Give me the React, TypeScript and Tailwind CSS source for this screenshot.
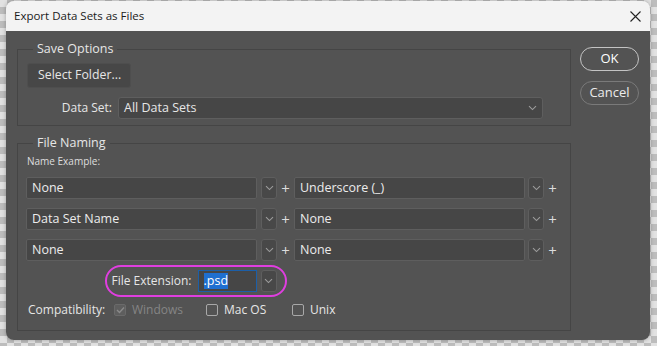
import React from 'react';

const font = { fontFamily: '"Open Sans", "Liberation Sans", sans-serif' };

function Chevron({ className = '' }: { className?: string }) {
  return (
    <svg width="9" height="6" viewBox="0 0 9 6" className={className}>
      <path d="M1 1.2 L4.5 4.6 L8 1.2" fill="none" stroke="#9c9c9c" strokeWidth="1.1" />
    </svg>
  );
}

function ChevronButton() {
  return (
    <div className="w-[16px] h-[22px] shrink-0 rounded-[3px] border border-[#5e5e5e] bg-[#484848] flex items-center justify-center">
      <Chevron />
    </div>
  );
}

function Field({ value }: { value: string }) {
  return (
    <div className="w-[231px] h-[22px] shrink-0 rounded-[2px] border border-[#5e5e5e] bg-[#464646] flex items-center pl-[5px] text-[12.5px] text-[#ececec]">
      {value}
    </div>
  );
}

function Plus() {
  return (
    <div className="w-[17px] shrink-0 flex items-center justify-center text-[15px] leading-none text-[#dcdcdc]">+</div>
  );
}

function NamingRow({ left, right }: { left: string; right: string }) {
  return (
    <div className="flex items-center">
      <Field value={left} />
      <div className="w-[4px]" />
      <ChevronButton />
      <Plus />
      <Field value={right} />
      <div className="w-[3px]" />
      <ChevronButton />
      <Plus />
    </div>
  );
}

function Checkbox({ checked, disabled, label }: { checked?: boolean; disabled?: boolean; label: string }) {
  return (
    <div className="flex items-center gap-[6px]">
      <div
        className={
          disabled
            ? 'w-[12px] h-[12px] rounded-[2px] border border-[#6a6a6a] bg-[#5e5e5e] flex items-center justify-center'
            : 'w-[12px] h-[12px] rounded-[2px] border border-[#a8a8a8] flex items-center justify-center'
        }
      >
        {checked && (
          <svg width="9" height="8" viewBox="0 0 9 8">
            <path d="M1 4 L3.5 6.5 L8 1.5" fill="none" stroke="#8a8a8a" strokeWidth="1.4" />
          </svg>
        )}
      </div>
      <span className={disabled ? 'text-[#858585]' : 'text-[#e6e6e6]'}>{label}</span>
    </div>
  );
}

export default function App() {
  return (
    <div
      className="w-[657px] h-[346px] pl-[6px] pt-[1px] bg-[conic-gradient(#bdbdbd_25%,#e2e2e2_0_50%,#bdbdbd_0_75%,#e2e2e2_0)] bg-[length:14px_14px]"
      style={font}
    >
      <div className="w-[644px] h-[339px] rounded-[8px] overflow-hidden flex flex-col shadow-[0_0_4px_rgba(0,0,0,0.3)]">
        {/* title bar */}
        <div className="h-[30px] shrink-0 bg-[#f3f3f3] flex items-center justify-between pl-[8px] pr-[9px]">
          <span className="text-[11.5px] text-[#1a1a1a]">Export Data Sets as Files</span>
          <svg width="11" height="11" viewBox="0 0 11 11">
            <path d="M0.5 0.5 L10.5 10.5 M10.5 0.5 L0.5 10.5" stroke="#222" strokeWidth="1.1" />
          </svg>
        </div>

        {/* body */}
        <div className="flex-1 bg-[#535353] flex pl-[11px] pr-[11px] text-[12px] text-[#e6e6e6]">
          <div className="w-[554px] flex flex-col pt-[9px] gap-[8px]">
            <fieldset className="border border-[#454545] px-[9px] pb-[6px]">
              <legend className="ml-[6px] px-[4px] text-[12.5px] leading-[18px]">Save Options</legend>
              <div className="mt-[5px] w-[104px] h-[25px] rounded-[3px] border border-[#4e4e4e] bg-[#474747] flex items-center pl-[10px] text-[12.3px]">
                Select Folder...
              </div>
              <div className="mt-[9px] flex items-center">
                <span className="w-[91px] text-right pr-[6px]">Data Set:</span>
                <div className="w-[425px] h-[22px] rounded-[3px] border border-[#5e5e5e] bg-[#464646] flex items-center justify-between pl-[5px] pr-[5px] text-[12.5px]">
                  <span>All Data Sets</span>
                  <Chevron />
                </div>
              </div>
            </fieldset>

            <fieldset className="border border-[#454545] px-[8px] pb-[11px]">
              <legend className="ml-[7px] px-[4px] text-[12.5px] leading-[18px]">File Naming</legend>
              <div className="text-[10px] leading-[14px] text-[#dedede] pl-[1px] mt-[2px]">Name Example:</div>
              <div className="mt-[9px] flex flex-col gap-[9px]">
                <NamingRow left="None" right="Underscore (_)" />
                <NamingRow left="Data Set Name" right="None" />
                <NamingRow left="None" right="None" />
              </div>
              <div className="mt-[4px] ml-[79px] w-[182px] h-[32px] rounded-full border-[2.5px] border-[#e03ee0] flex items-center pl-[4.5px]">
                <span className="w-[86px]">File Extension:</span>
                <div className="w-[59px] h-[22px] border border-[#1c5fa8] bg-[#464646] flex items-center pl-[5px] text-[12.5px]">
                  <span className="bg-[#1f6fd0] text-white leading-[16px]">.psd</span>
                </div>
                <div className="w-[4px]" />
                <ChevronButton />
              </div>
              <div className="mt-[4px] flex items-center pl-[2px]">
                <span className="w-[86px]">Compatibility:</span>
                <div className="w-[92px]">
                  <Checkbox checked disabled label="Windows" />
                </div>
                <div className="w-[86px]">
                  <Checkbox label="Mac OS" />
                </div>
                <Checkbox label="Unix" />
              </div>
            </fieldset>
          </div>

          <div className="ml-[9px] pt-[16px] flex flex-col gap-[10px]">
            <div className="w-[59px] h-[24px] rounded-full border-[1.5px] border-[#c4c4c4] flex items-center justify-center text-[13px] text-white">
              OK
            </div>
            <div className="w-[59px] h-[24px] rounded-full border-[1.5px] border-[#7a7a7a] flex items-center justify-center text-[13px] text-[#ececec]">
              Cancel
            </div>
          </div>
        </div>
      </div>
    </div>
  );
}
